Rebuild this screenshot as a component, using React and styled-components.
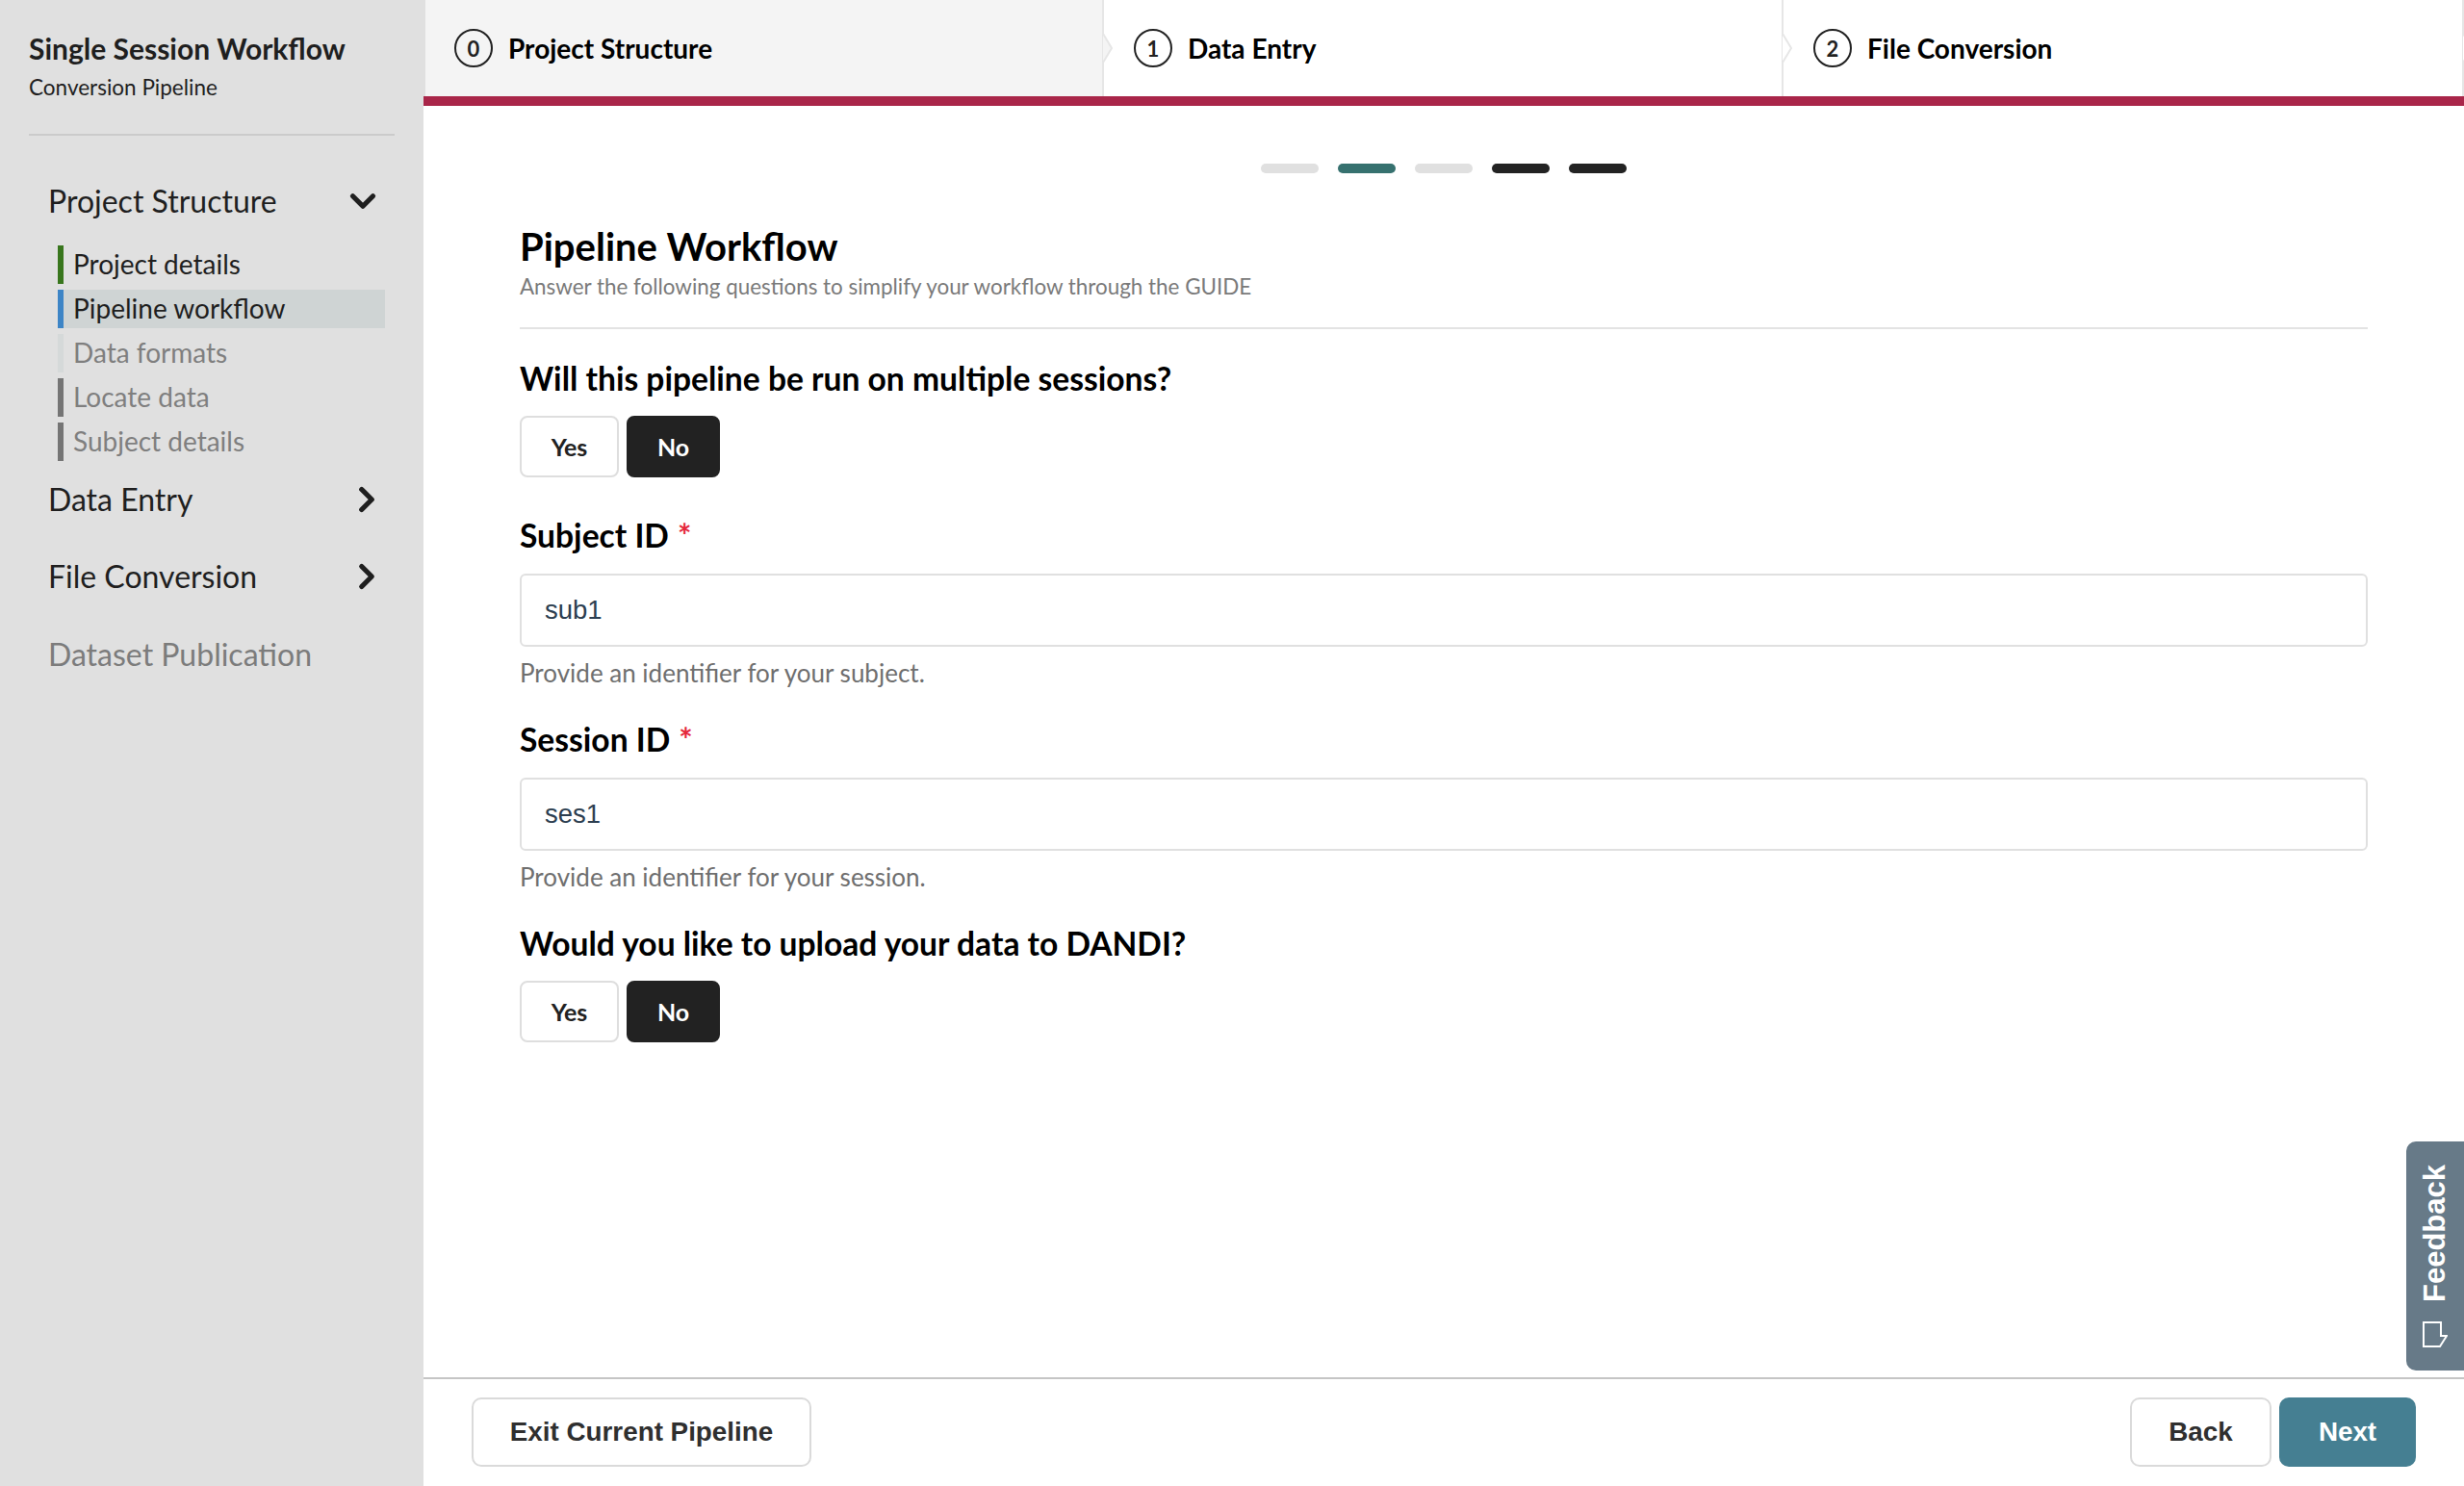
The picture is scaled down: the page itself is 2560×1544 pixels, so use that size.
import React from 'react'
import styled, { createGlobalStyle } from 'styled-components'
import { ChevronDown, ChevronRight } from 'lucide-react'

const Global = createGlobalStyle`
   html, body {
      margin: 0;
      padding: 0;
      background: #fff;
      font-family: Lato, "Open Sans", sans-serif;
      color: #000;
   }
   * {
      box-sizing: border-box;
   }
`

const Page = styled.div`
   display: grid;
   grid-template-columns: 440px 1fr;
   height: 100vh;
   position: relative;
   overflow: hidden;
`

const Sidebar = styled.aside`
   background: #e0e0e0;
   padding-top: 30px;
   color: #1f1f1f;
`

const Brand = styled.div`
   margin: 0 30px;
   padding-bottom: 33px;
   border-bottom: 2px solid #cbcbcb;
`

const BrandTitle = styled.h1`
   margin: 0;
   font-size: 30px;
   line-height: 40px;
   font-weight: 700;
`

const BrandSub = styled.div`
   margin-top: 6px;
   font-size: 22.5px;
   line-height: 30px;
`

const Nav = styled.nav`
   padding-top: 47px;
`

const NavRow = styled.div`
   display: flex;
   align-items: center;
   justify-content: space-between;
   height: 44px;
   padding-left: 50px;
   padding-right: ${(p) => (p.$open ? '42px' : '38px')};
   padding-bottom: 3px;
   margin-bottom: ${(p) => p.$gap || 0}px;
   font-size: 32px;
   line-height: 41px;
   color: ${(p) => (p.$muted ? '#7c7c7c' : '#1f1f1f')};
`

const SubList = styled.ul`
   list-style: none;
   margin: 23px 0 19px;
   padding: 0;
   display: flex;
   flex-direction: column;
   gap: 6px;
`

const SubItem = styled.li`
   width: 340px;
   height: 40px;
   margin-left: 60px;
   padding-left: 10px;
   border-left: 6px solid ${(p) => p.$bar};
   background: ${(p) => (p.$active ? '#cfd4d4' : 'transparent')};
   font-size: 28px;
   line-height: 38px;
   color: ${(p) => (p.$muted ? '#7f7f7f' : '#1f1f1f')};
`

const Main = styled.main`
   display: flex;
   flex-direction: column;
   min-width: 0;
`

const Steps = styled.div`
   display: grid;
   grid-template-columns: 707px 706px 1fr;
   height: 110px;
   flex: none;
   border-bottom: 10px solid #a92649;
`

const Step = styled.div`
   position: relative;
   display: flex;
   align-items: center;
   gap: 16px;
   padding-left: ${(p) => (p.$active ? '30px' : '31px')};
   background: ${(p) => (p.$active ? '#f4f4f4' : '#fff')};
   border-left: ${(p) => (p.$active ? '2px solid #e0e0e0' : '0')};
   border-right: 2px solid #e6e6e6;
   font-size: 28px;
   font-weight: 700;
`

const StepNumber = styled.span`
   display: flex;
   align-items: center;
   justify-content: center;
   width: 40px;
   height: 40px;
   border: 2px solid #222;
   border-radius: 50%;
   font-size: 22px;
   font-weight: 700;
   color: #222;
`

const StepArrow = styled.svg`
   position: absolute;
   top: 34px;
   right: -12px;
   z-index: 1;
`

const Content = styled.div`
   flex: 1;
   min-height: 0;
   padding: 60px 100px 0;
`

const Dots = styled.div`
   display: flex;
   justify-content: center;
   gap: 20px;
   margin-bottom: 51px;
`

const Dot = styled.span`
   width: 60px;
   height: 10px;
   border-radius: 5px;
   background: ${(p) => p.$color};
`

const Header = styled.header`
   padding-bottom: 28px;
   border-bottom: 2px solid #e3e3e3;
`

const Title = styled.h2`
   margin: 0;
   font-size: 40px;
   line-height: 50px;
   font-weight: 700;
`

const Subtitle = styled.p`
   margin: 3px 0 0;
   font-size: 22.4px;
   line-height: 28px;
   color: #7a7a7a;
`

const Label = styled.div`
   margin-top: ${(p) => p.$top}px;
   font-size: 33.6px;
   line-height: 40px;
   font-weight: 700;
`

const Star = styled.span`
   margin-left: 9px;
   color: #e5283c;
   font-weight: 700;
   line-height: 0;
   font-size: 34px;
`

const Toggle = styled.div`
   display: flex;
   gap: 8px;
   margin-top: 19px;
`

const ToggleButton = styled.button`
   width: ${(p) => (p.$on ? '97px' : '103px')};
   height: 64px;
   padding: 0;
   border: 2px solid ${(p) => (p.$on ? '#222' : '#dedede')};
   border-radius: 8px;
   background: ${(p) => (p.$on ? '#222' : '#fff')};
   color: ${(p) => (p.$on ? '#fff' : '#222')};
   font-family: Lato, sans-serif;
   font-size: 25px;
   font-weight: 700;
`

const Input = styled.input`
   display: block;
   width: 100%;
   height: 76px;
   margin-top: 20px;
   padding: 0 24px;
   border: 2px solid #e0e0e0;
   border-radius: 6px;
   background: #fff;
   font-family: "Liberation Sans", Arial, sans-serif;
   font-size: 27.5px;
   color: #2c3e50;
   outline: none;
`

const Hint = styled.div`
   margin-top: 13px;
   font-size: 26px;
   line-height: 28px;
   color: #6f6f6f;
`

const Footer = styled.footer`
   flex: none;
   display: flex;
   align-items: flex-start;
   justify-content: space-between;
   height: 113px;
   padding: 19px 50px 0;
   border-top: 2px solid #c5c5c5;
`

const FooterGroup = styled.div`
   display: flex;
   gap: 8px;
`

const FooterButton = styled.button`
   width: ${(p) => p.$width}px;
   height: 72px;
   padding: 0;
   border: ${(p) => (p.$primary ? '0' : '2px solid #dadada')};
   border-radius: 10px;
   background: ${(p) => (p.$primary ? '#457f92' : '#fff')};
   color: ${(p) => (p.$primary ? '#fff' : '#2f2f2f')};
   font-family: "Liberation Sans", Arial, sans-serif;
   font-size: 27.8px;
   font-weight: 700;
`

const FeedbackTab = styled.div`
   position: absolute;
   right: 0;
   top: 1186px;
   display: flex;
   align-items: center;
   gap: 20px;
   height: 238px;
   width: 60px;
   padding: 24px 0 22px;
   writing-mode: vertical-rl;
   transform: rotate(180deg);
   flex-direction: row;
   border-radius: 0 10px 10px 0;
   background: #677a88;
   color: #fff;
   font-family: "Liberation Sans", Arial, sans-serif;
   font-size: 31px;
   font-weight: 700;
`

const FeedbackIcon = styled.svg`
   transform: rotate(180deg);
`

const steps = [
   { label: 'Project Structure', active: true },
   { label: 'Data Entry' },
   { label: 'File Conversion' },
]

const subItems = [
   { label: 'Project details', bar: '#38761d' },
   { label: 'Pipeline workflow', bar: '#3d85c6', active: true },
   { label: 'Data formats', bar: '#d5d9d9', muted: true },
   { label: 'Locate data', bar: '#757575', muted: true },
   { label: 'Subject details', bar: '#757575', muted: true },
]

const dots = ['#e0e0e0', '#36716f', '#e0e0e0', '#232323', '#232323']

function YesNo() {
   return (
      <Toggle>
         <ToggleButton>Yes</ToggleButton>
         <ToggleButton $on>No</ToggleButton>
      </Toggle>
   )
}

function App() {
   return (
      <Page>
         <Global />
         <Sidebar>
            <Brand>
               <BrandTitle>Single Session Workflow</BrandTitle>
               <BrandSub>Conversion Pipeline</BrandSub>
            </Brand>
            <Nav>
               <NavRow $open>
                  Project Structure
                  <ChevronDown size={42} strokeWidth={3} />
               </NavRow>
               <SubList>
                  {subItems.map((item) => (
                     <SubItem
                        key={item.label}
                        $bar={item.bar}
                        $active={item.active}
                        $muted={item.muted}
                     >
                        {item.label}
                     </SubItem>
                  ))}
               </SubList>
               <NavRow $gap={36}>
                  Data Entry
                  <ChevronRight size={42} strokeWidth={3} />
               </NavRow>
               <NavRow $gap={37}>
                  File Conversion
                  <ChevronRight size={42} strokeWidth={3} />
               </NavRow>
               <NavRow $muted>Dataset Publication</NavRow>
            </Nav>
         </Sidebar>
         <Main>
            <Steps>
               {steps.map((step, i) => (
                  <Step key={step.label} $active={step.active}>
                     <StepNumber>{i}</StepNumber>
                     {step.label}
                     <StepArrow width="12" height="32" viewBox="0 0 12 32">
                        <path
                           d="M1 1 L10 16 L1 31"
                           fill={step.active ? '#f4f4f4' : '#fff'}
                           stroke="#e6e6e6"
                           strokeWidth="2"
                        />
                     </StepArrow>
                  </Step>
               ))}
            </Steps>
            <Content>
               <Dots>
                  {dots.map((c, i) => (
                     <Dot key={i} $color={c} />
                  ))}
               </Dots>
               <Header>
                  <Title>Pipeline Workflow</Title>
                  <Subtitle>
                     Answer the following questions to simplify your workflow
                     through the GUIDE
                  </Subtitle>
               </Header>
               <Label $top={31}>Will this pipeline be run on multiple sessions?</Label>
               <YesNo />
               <Label $top={40}>
                  Subject ID<Star>*</Star>
               </Label>
               <Input defaultValue="sub1" />
               <Hint>Provide an identifier for your subject.</Hint>
               <Label $top={35}>
                  Session ID<Star>*</Star>
               </Label>
               <Input defaultValue="ses1" />
               <Hint>Provide an identifier for your session.</Hint>
               <Label $top={35}>Would you like to upload your data to DANDI?</Label>
               <YesNo />
            </Content>
            <Footer>
               <FooterButton $width={353}>Exit Current Pipeline</FooterButton>
               <FooterGroup>
                  <FooterButton $width={147}>Back</FooterButton>
                  <FooterButton $width={142} $primary>
                     Next
                  </FooterButton>
               </FooterGroup>
            </Footer>
         </Main>
         <FeedbackTab>
            <FeedbackIcon width="26" height="27" viewBox="0 0 26 27">
               <path
                  d="M1 1 H19 V15 H25 L18 26 H1 Z"
                  fill="none"
                  stroke="#fff"
                  strokeWidth="2"
               />
            </FeedbackIcon>
            Feedback
         </FeedbackTab>
      </Page>
   )
}

export default App
